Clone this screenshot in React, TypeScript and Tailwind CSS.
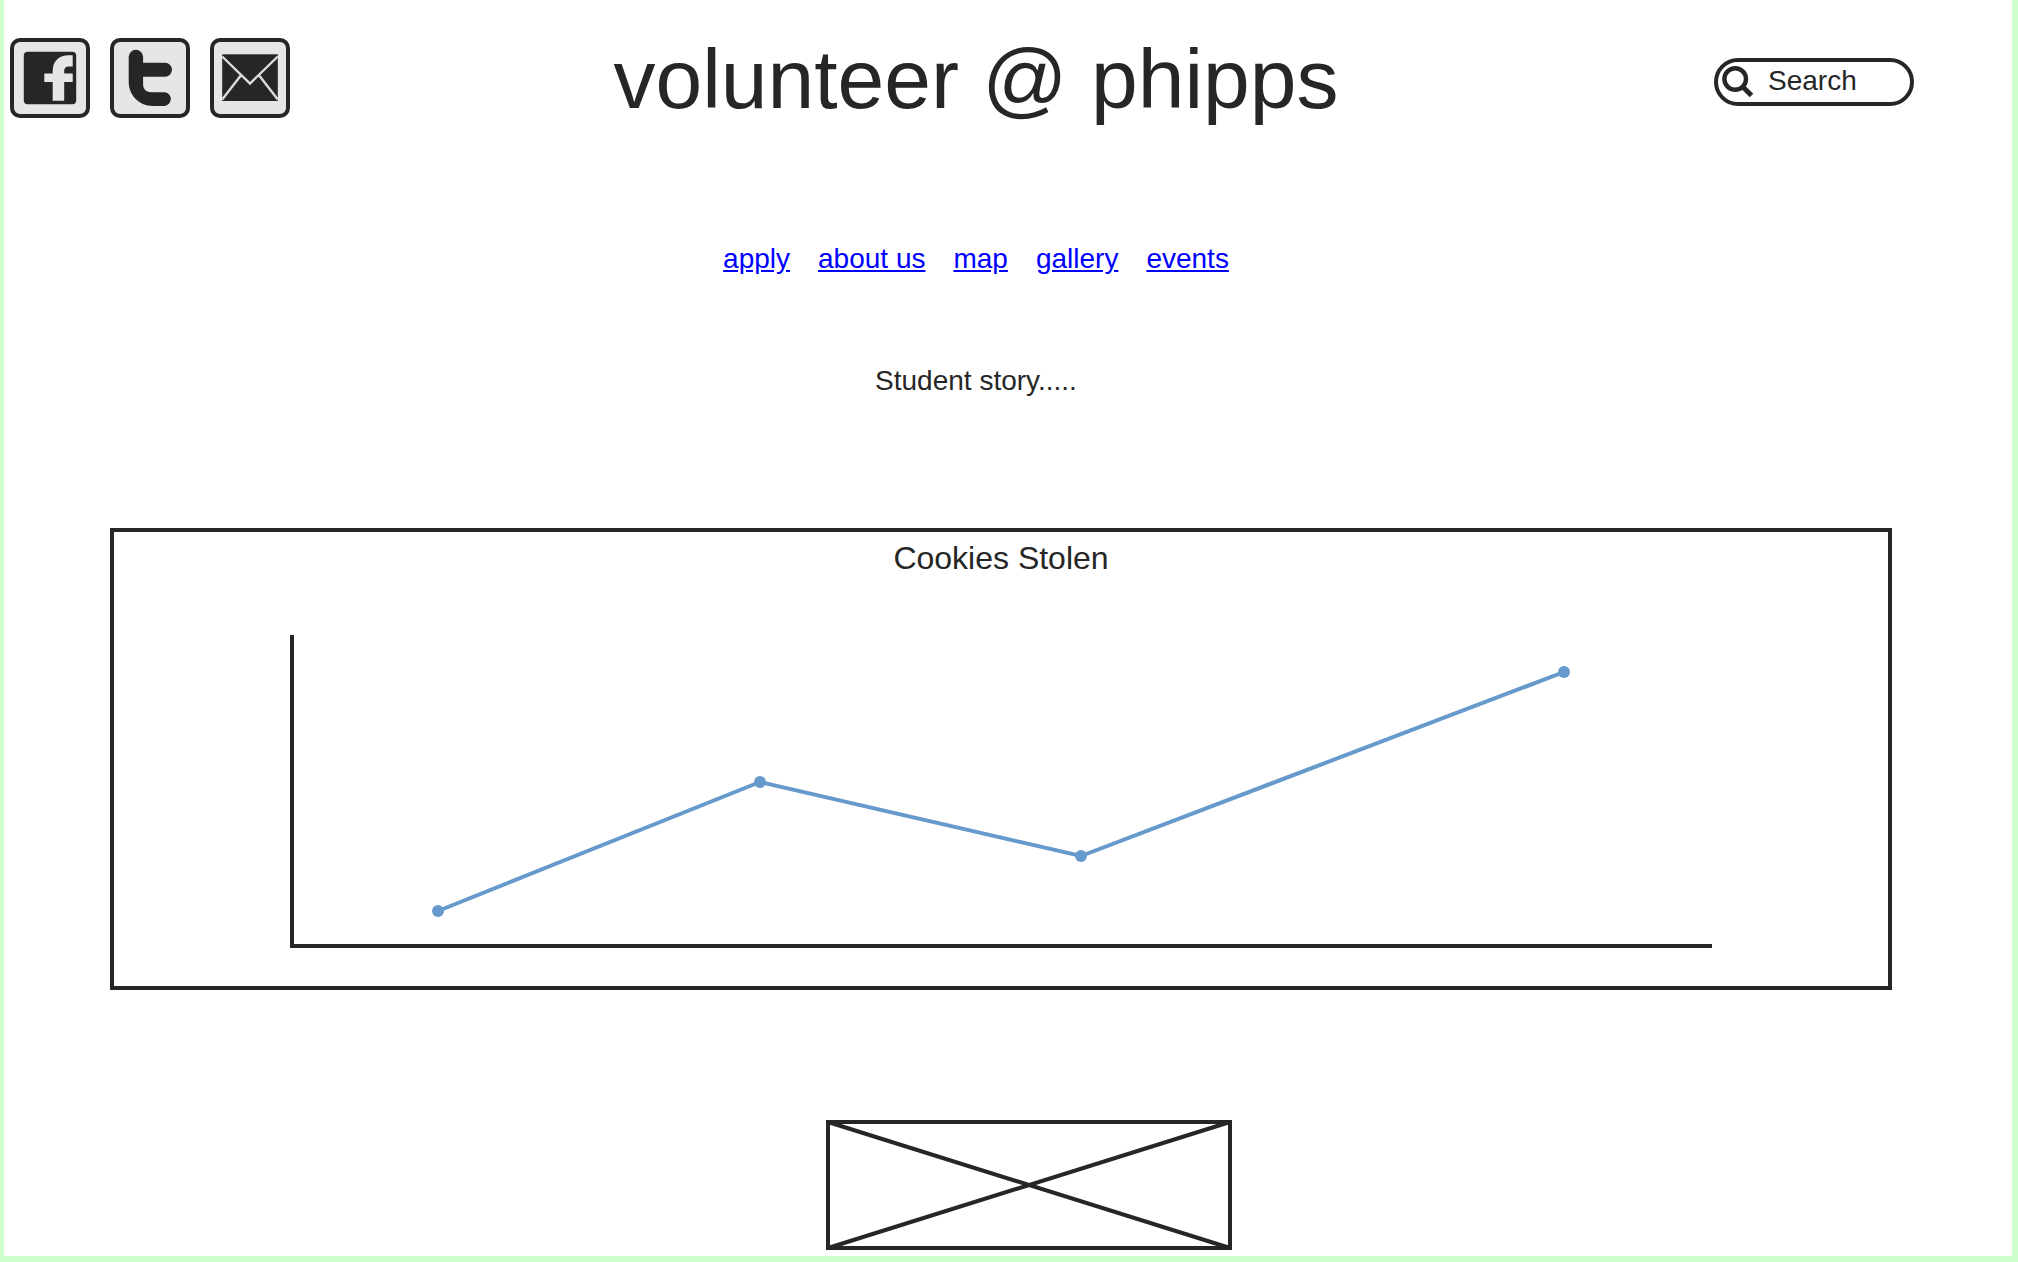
import React from "react";

const links = ["apply", "about us", "map", "gallery", "events"];

const points = [
  { x: 324, y: 332 },
  { x: 646, y: 203 },
  { x: 967, y: 277 },
  { x: 1450, y: 93 },
];

function FacebookIcon() {
  return (
    <svg viewBox="0 0 80 80" className="size-full" aria-hidden="true">
      <rect x="13.8" y="13.8" width="52.4" height="52.4" rx="4" fill="#262626" />
      <path
        d="M42.7 62.8V44H34.3V35.5H42.7V33C42.7 23 49 17.2 59 17.2H62.7V28.6H59C55.5 28.6 54.2 30.5 54.2 33V35.5H62.7V44H54.2V62.8Z"
        fill="#e6e6e6"
      />
    </svg>
  );
}

function TwitterIcon() {
  return (
    <svg viewBox="0 0 80 80" className="size-full" aria-hidden="true">
      <path
        d="M18.7 19a7.2 7.2 0 0 1 14.4 0V24.7H55a7 7 0 0 1 0 14H33.1V46C33.1 51 36 54.2 41 54.2H55a7 7 0 0 1 0 13.8H43C28 68 18.7 56 18.7 44Z"
        fill="#262626"
      />
    </svg>
  );
}

function MailIcon() {
  return (
    <svg viewBox="0 0 80 80" className="size-full" aria-hidden="true">
      <rect x="12.2" y="16.3" width="55.6" height="46.7" fill="#262626" />
      <path
        d="M12.2 18.5L40 45.5L67.8 18.5M12.2 61.5L30.8 37.5M67.8 61.5L49.2 37.5"
        fill="none"
        stroke="#dcdcdc"
        strokeWidth="2.4"
      />
    </svg>
  );
}

const social = [
  { name: "Facebook", Icon: FacebookIcon },
  { name: "Twitter", Icon: TwitterIcon },
  { name: "Email", Icon: MailIcon },
];

function SearchBox() {
  return (
    <label className="mt-2 mr-7 flex h-12 w-[200px] items-center justify-self-end rounded-full border-4 border-[#262626] pl-1">
      <svg viewBox="0 0 32 32" className="size-8 shrink-0" fill="none" stroke="#262626" aria-hidden="true">
        <circle cx="13.2" cy="13" r="10.8" strokeWidth="4.4" />
        <path d="M20.5 20.5L29.5 29.5" strokeWidth="5" />
      </svg>
      <input
        type="text"
        aria-label="Search"
        placeholder="Search"
        className="ml-3.5 w-full min-w-0 bg-transparent pb-0.5 text-[28px] leading-8 outline-none placeholder:text-[#262626]"
      />
    </label>
  );
}

function CookiesChart() {
  return (
    <figure className="mt-[131px] mr-[120px] ml-[106px] border-4 border-[#262626] pt-1.5">
      <figcaption className="text-center text-[32px] leading-10">Cookies Stolen</figcaption>
      <svg viewBox="0 0 1774 408" className="block w-full" role="img" aria-label="Line chart of cookies stolen">
        <path d="M178 57V368H1598" fill="none" stroke="#262626" strokeWidth="4" />
        <polyline
          points={points.map((p) => `${p.x},${p.y + 1}`).join(" ")}
          fill="none"
          stroke="#6699cc"
          strokeWidth="4"
        />
        {points.map((p) => (
          <circle key={p.x} cx={p.x} cy={p.y + 1} r="6" fill="#6699cc" />
        ))}
      </svg>
    </figure>
  );
}

export default function App() {
  return (
    <div className="flex min-h-screen flex-col border-r-6 border-b-6 border-l-4 border-[#ccffcc] bg-white font-['Liberation_Sans',Arial,sans-serif] text-[#262626]">
      <header className="pr-[70px] pl-1.5">
        <div className="grid grid-cols-[1fr_auto_1fr] items-center pt-[38px]">
          <div className="flex gap-5">
            {social.map(({ name, Icon }) => (
              <a
                key={name}
                href="#"
                aria-label={name}
                className="size-20 rounded-[10px] border-4 border-[#262626] bg-[#e6e6e6]"
              >
                <div className="-m-1 size-20">
                  <Icon />
                </div>
              </a>
            ))}
          </div>
          <h1 className="pt-0.5 text-[84px] leading-[78px] whitespace-nowrap">volunteer @ phipps</h1>
          <SearchBox />
        </div>
        <nav className="mt-[125px] flex justify-center gap-7 text-[28px] leading-8">
          {links.map((link) => (
            <a key={link} href="#" className="text-[#0000ff] underline">
              {link}
            </a>
          ))}
        </nav>
      </header>
      <main>
        <p className="mt-[90px] pr-[70px] pl-1.5 text-center text-[28px] leading-8">Student story.....</p>
        <CookiesChart />
        <div className="mt-[130px] flex justify-center pl-[42px]">
          <svg
            viewBox="0 0 406 130"
            className="h-[130px] w-[406px]"
            fill="none"
            stroke="#262626"
            strokeWidth="4"
            role="img"
            aria-label="Image placeholder"
          >
            <rect x="2" y="2" width="402" height="126" />
            <path d="M2 2L404 128M404 2L2 128" />
          </svg>
        </div>
      </main>
    </div>
  );
}
